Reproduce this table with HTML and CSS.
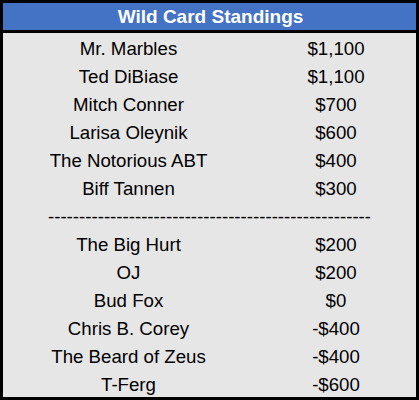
FILE: index.html
```html
<!DOCTYPE html>
<html>
<head>
<meta charset="utf-8">
<link rel="stylesheet" href="styles.css">
</head>
<body>
<div class="board">
  <div class="title">Wild Card Standings</div>
  <div class="rows">
    <div class="name">Mr. Marbles</div><div class="amt">$1,100</div>
    <div class="name">Ted DiBiase</div><div class="amt">$1,100</div>
    <div class="name">Mitch Conner</div><div class="amt">$700</div>
    <div class="name">Larisa Oleynik</div><div class="amt">$600</div>
    <div class="name">The Notorious ABT</div><div class="amt">$400</div>
    <div class="name">Biff Tannen</div><div class="amt">$300</div>
    <div class="cut">----------------------------------------------------</div>
    <div class="name">The Big Hurt</div><div class="amt">$200</div>
    <div class="name">OJ</div><div class="amt">$200</div>
    <div class="name">Bud Fox</div><div class="amt">$0</div>
    <div class="name">Chris B. Corey</div><div class="amt">-$400</div>
    <div class="name">The Beard of Zeus</div><div class="amt">-$400</div>
    <div class="name">T-Ferg</div><div class="amt">-$600</div>
  </div>
</div>
</body>
</html>
```
FILE: styles.css
```css
html, body {
  margin: 0;
  padding: 0;
  background: #ffffff;
}
.board {
  width: 419px;
  height: 400px;
  box-sizing: border-box;
  border: 3px solid #000;
  background: #e7e6e6;
  font-family: "Liberation Sans", Arial, sans-serif;
  color: #000;
  display: flex;
  flex-direction: column;
}
.title {
  height: 27px;
  background: #4472c4;
  color: #fff;
  font-weight: bold;
  font-size: 19px;
  line-height: 27px;
  text-align: center;
  border-bottom: 3px solid #000;
  padding-left: 2px;
}
.rows {
  display: grid;
  grid-template-columns: 251px 162px;
  grid-auto-rows: 28px;
  font-size: 18.67px;
}
.name, .amt, .cut {
  text-align: center;
  line-height: 25px;
  padding-top: 3px;
  white-space: nowrap;
  overflow: hidden;
}
.amt {
  padding-left: 2px;
}
.cut {
  grid-column: 1 / 3;
}
```
